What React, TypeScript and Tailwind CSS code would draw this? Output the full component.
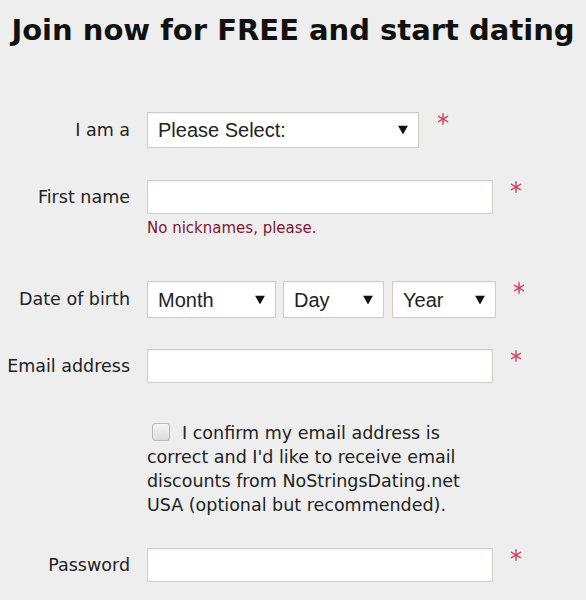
import type { ReactNode } from 'react'

function Asterisk({ className = '' }: { className?: string }) {
  return (
    <svg
      width="12"
      height="12"
      viewBox="0 0 12 12"
      className={`shrink-0 text-[#d0485c] ${className}`}
      aria-hidden="true"
    >
      <g stroke="currentColor" strokeWidth="1.5" strokeLinecap="round">
        <line x1="6" y1="0.8" x2="6" y2="11.2" />
        <line x1="1.5" y1="3.4" x2="10.5" y2="8.6" />
        <line x1="1.5" y1="8.6" x2="10.5" y2="3.4" />
      </g>
    </svg>
  )
}

function Label({ children, h }: { children: ReactNode; h: string }) {
  return (
    <label className={`flex w-[130px] shrink-0 items-center justify-end text-[17.5px] text-[#222] ${h}`}>
      {children}
    </label>
  )
}

function Select({ value, w }: { value: string; w: string }) {
  return (
    <div className={`relative h-full ${w}`}>
      <select
        defaultValue=""
        className="h-full w-full appearance-none border border-[#cfcac4] bg-white pl-[10px] font-['Liberation_Sans',Arial,sans-serif] text-[20px] text-[#222] shadow-[inset_0_1px_2px_rgba(0,0,0,0.06)] outline-none"
      >
        <option value="">{value}</option>
      </select>
      <svg
        width="10"
        height="9"
        viewBox="0 0 10 9"
        className="pointer-events-none absolute top-1/2 right-[11px] -translate-y-1/2"
        aria-hidden="true"
      >
        <path d="M0 0h10L5 9z" fill="#111" />
      </svg>
    </div>
  )
}

function TextInput({ type = 'text' }: { type?: string }) {
  return (
    <input
      type={type}
      className="h-[34px] w-[346px] border border-[#d3cdc6] bg-white px-2 text-[17px] shadow-[inset_0_1px_2px_rgba(0,0,0,0.06)] outline-none"
    />
  )
}

export default function App() {
  return (
    <div className="min-h-[600px] bg-[#eeeeee] font-['DejaVu_Sans',Verdana,sans-serif] text-[#222]">
      <h1 className="pt-[12px] text-center text-[29px] leading-[36px] font-bold whitespace-nowrap text-[#111]">
        Join now for FREE and start dating
      </h1>

      <form className="flex flex-col">
        {/* I am a */}
        <div className="mt-[64px] flex items-start">
          <Label h="h-[36px]">I am a</Label>
          <div className="ml-[17px] h-[36px]">
            <Select value="Please Select:" w="w-[272px]" />
          </div>
          <Asterisk className="mt-[1px] ml-[18px]" />
        </div>

        {/* First name */}
        <div className="mt-[32px] flex items-start">
          <Label h="h-[34px]">First name</Label>
          <div className="ml-[17px] flex flex-col">
            <TextInput />
            <span className="mt-[6px] text-[15px] leading-[16px] text-[#7d1634]">
              No nicknames, please.
            </span>
          </div>
          <Asterisk className="mt-[1px] ml-[17px]" />
        </div>

        {/* Date of birth */}
        <div className="mt-[45px] flex items-start">
          <Label h="h-[37px]">Date of birth</Label>
          <div className="ml-[17px] flex h-[37px] gap-[7px]">
            <Select value="Month" w="w-[129px]" />
            <Select value="Day" w="w-[101px]" />
            <div className="ml-[1px] h-full">
              <Select value="Year" w="w-[104px]" />
            </div>
          </div>
          <Asterisk className="mt-[1px] ml-[17px]" />
        </div>

        {/* Email */}
        <div className="mt-[31px] flex items-start">
          <Label h="h-[34px]">Email address</Label>
          <div className="ml-[17px]">
            <TextInput type="email" />
          </div>
          <Asterisk className="mt-[1px] ml-[17px]" />
        </div>

        <p className="mt-[38px] ml-[147px] w-[360px] text-[17.5px] leading-[24px] text-[#222]">
          <span className="mr-[12px] ml-[5px] inline-block h-[18px] w-[18px] rounded-[3px] border border-[#b9b9b9] bg-gradient-to-b from-[#f4f4f4] to-[#dcdcdc] align-[-2px]" />
          I confirm my email address is
          <br />
          correct and I'd like to receive email
          <br />
          discounts from NoStringsDating.net
          <br />
          USA (optional but recommended).
        </p>

        {/* Password */}
        <div className="mt-[31px] flex items-start">
          <Label h="h-[35px]">Password</Label>
          <div className="ml-[17px]">
            <TextInput type="password" />
          </div>
          <Asterisk className="mt-[1px] ml-[17px]" />
        </div>
      </form>
    </div>
  )
}
